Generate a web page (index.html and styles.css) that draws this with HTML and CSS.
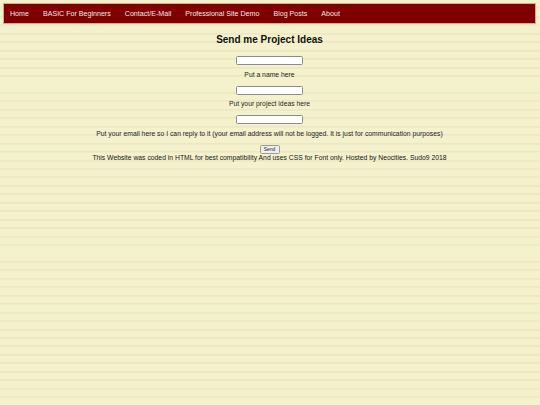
FILE: index.html
```html
<!DOCTYPE html>
<html lang="en">
<head>
<meta charset="utf-8">
<title>Send me Project Ideas</title>
<link rel="stylesheet" href="styles.css">
</head>
<body>
<nav class="topnav">
  <a class="nav-item" href="#">Home</a>
  <a class="nav-item" href="#">BASIC For Beginners</a>
  <a class="nav-item" href="#">Contact/E-Mail</a>
  <a class="nav-item" href="#">Professional Site Demo</a>
  <a class="nav-item" href="#">Blog Posts</a>
  <a class="nav-item" href="#">About</a>
</nav>
<main class="content">
  <h1 class="title">Send me Project Ideas</h1>
  <form class="idea-form">
    <input class="field" type="text">
    <p class="label">Put a name here</p>
    <input class="field" type="text">
    <p class="label">Put your project ideas here</p>
    <input class="field" type="text">
    <p class="label">Put your email here so I can reply to it (your email address will not be logged. It is just for communication purposes)</p>
    <button class="send" type="button">Send</button>
  </form>
  <p class="footer">This Website was coded in HTML for best compatibility And uses CSS for Font only. Hosted by Neocities. Sudo9 2018</p>
</main>
</body>
</html>
```
FILE: styles.css
```css
html {
  background-color: #f4f2cd;
  background-image: repeating-linear-gradient(to bottom, transparent 0, transparent 7.45px, #e9ddbc 7.45px, #e9ddbc 8.45px);
  background-position: 0 0.4px;
  min-height: 100%;
}
body {
  margin: 0;
  padding: 3px 4px 0 3px;
  font-family: "Liberation Sans", Arial, sans-serif;
  color: #1a1a1a;
}
.topnav {
  display: flex;
  align-items: center;
  height: 19px;
  background: #7e0000;
  border: 1px solid #d9a894;
}
.nav-item {
  padding: 0 7px;
  font-size: 7.1px;
  color: #f4e4e4;
  text-decoration: none;
}
.nav-item:first-child {
  padding-left: 6px;
}
.content {
  display: flex;
  flex-direction: column;
  align-items: center;
}
.title {
  margin: 9px 0 9px;
  font-size: 10px;
  line-height: 14px;
  font-weight: bold;
  color: #111;
}
.idea-form {
  display: flex;
  flex-direction: column;
  align-items: center;
}
.field {
  box-sizing: border-box;
  width: 67px;
  height: 9px;
  margin: 0;
  padding: 0;
  background: #fff;
  border: 1px solid #8c8c8c;
  border-radius: 1.5px;
}
.label {
  margin: 5.5px 0 7px;
  font-size: 6.8px;
  line-height: 8px;
  color: #1e1e1e;
  text-align: center;
}
.send {
  box-sizing: border-box;
  width: 20px;
  height: 9px;
  margin: 0.5px 0 0;
  padding: 0;
  font-family: "Liberation Sans", Arial, sans-serif;
  font-size: 5px;
  line-height: 7px;
  color: #222;
  background: #efefef;
  border: 1px solid #9a9a9a;
  border-radius: 1.5px;
}
.footer {
  margin: 0;
  font-size: 6.8px;
  line-height: 8px;
  color: #161616;
  text-align: center;
}
```
